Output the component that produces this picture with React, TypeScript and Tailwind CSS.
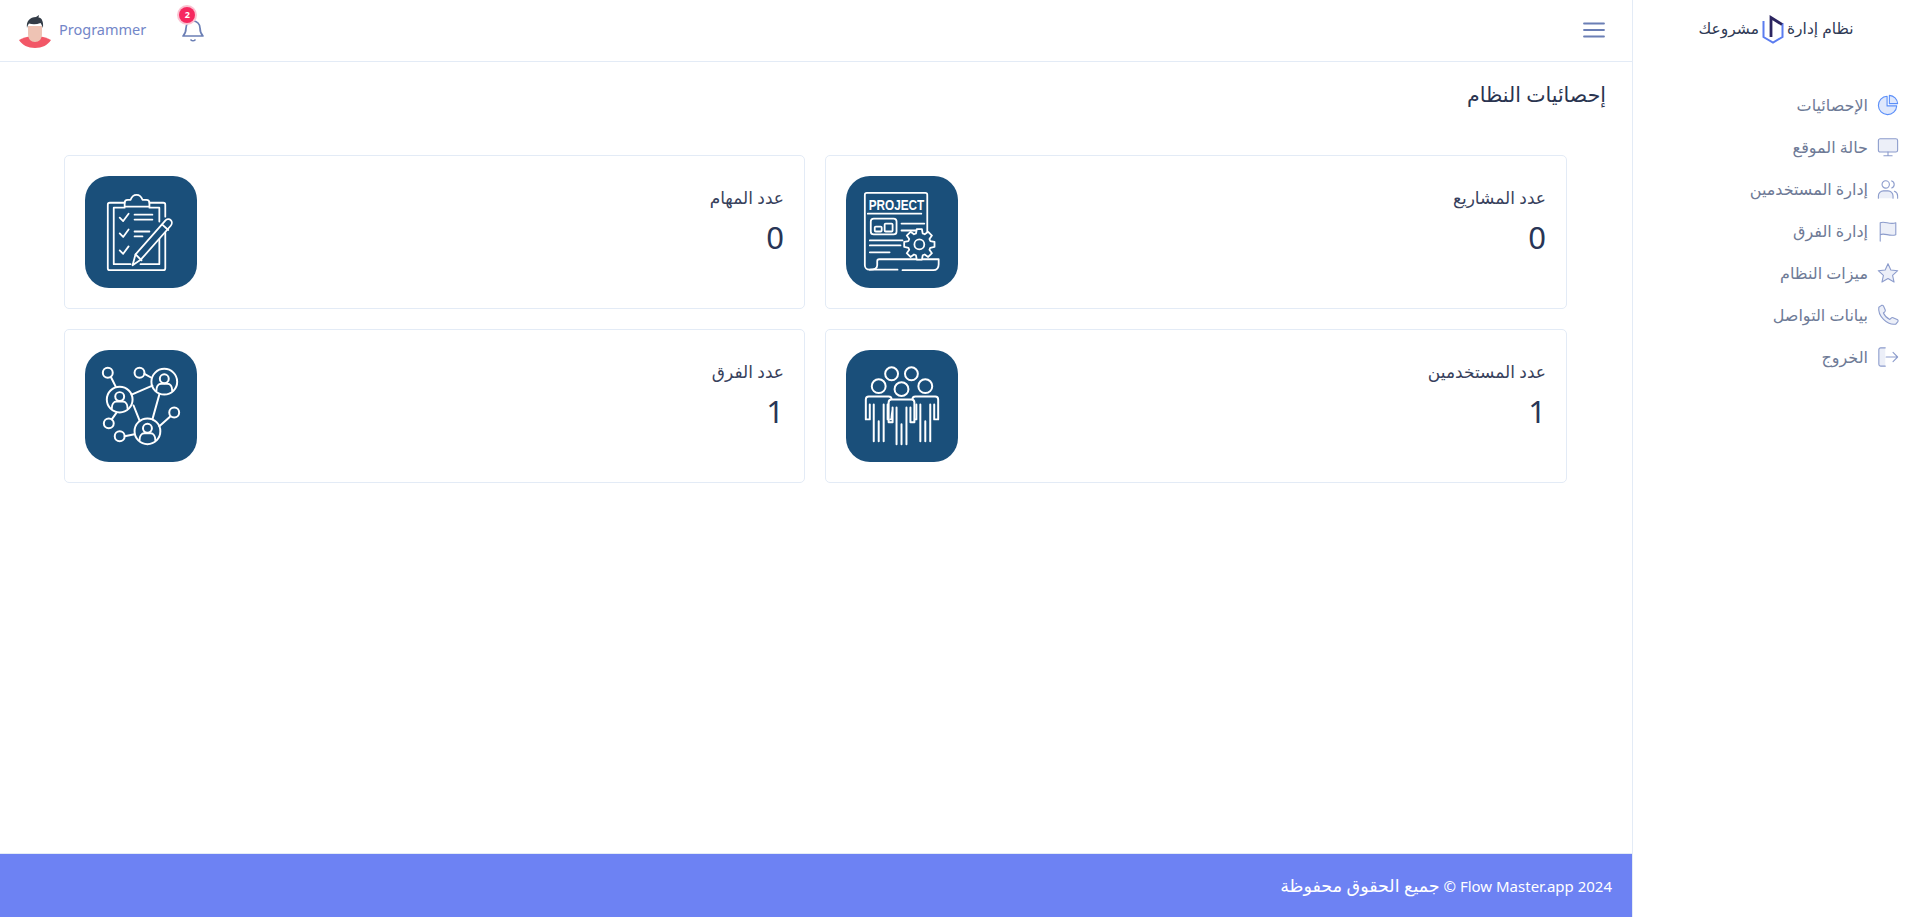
import React from 'react';

const font = "font-['Noto_Sans','DejaVu_Sans',sans-serif]";
const tile = '#1a4f7a';

const PieIcon = () => (
  <svg viewBox="0 0 24 24" className="w-[22px] h-[22px]" fill="none" stroke="#5b8ff9" strokeWidth="1.2" strokeLinejoin="round">
    <path d="M11 2.500a10 10 0 1 0 10.500 10.500H11z" fill="#dfe8fc" />
    <path d="M13.500 1.500a9.500 9.500 0 0 1 9 9h-9z" fill="#dfe8fc" />
  </svg>
);

const MonitorIcon = () => (
  <svg viewBox="0 0 24 24" className="w-[22px] h-[22px]" fill="none" stroke="#8c9ccc" strokeWidth="1.2" strokeLinecap="round" strokeLinejoin="round">
    <rect x="1.500" y="3" width="21" height="14.500" rx="2" fill="#eceff8" />
    <path d="M12 17.500v4M7.500 21.500h9" />
  </svg>
);

const UsersIcon = () => (
  <svg viewBox="0 0 24 24" className="w-[22px] h-[22px]" fill="none" stroke="#8c9ccc" strokeWidth="1.2" strokeLinecap="round" strokeLinejoin="round">
    <circle cx="9.500" cy="7" r="4" />
    <path d="M1.500 22v-2.500A5.500 5.500 0 0 1 7 14h5a5.500 5.500 0 0 1 5.500 5.500V22" fill="#eceff8" />
    <path d="M16 3.200a4 4 0 0 1 0 7.600M22.500 22v-2.500a5.500 5.500 0 0 0-3.500-5" />
  </svg>
);

const FlagIcon = () => (
  <svg viewBox="0 0 24 24" className="w-[22px] h-[22px]" fill="none" stroke="#8c9ccc" strokeWidth="1.2" strokeLinecap="round" strokeLinejoin="round">
    <path d="M3.500 23V3c5-2.500 10 2.500 17 0v13c-7 2.500-12-2.500-17 0z" fill="#eceff8" />
  </svg>
);

const StarIcon = () => (
  <svg viewBox="0 0 24 24" className="w-[22px] h-[22px]" fill="none" stroke="#8c9ccc" strokeWidth="1.2" strokeLinejoin="round">
    <path d="M12 1.800l3.100 6.900 7.500.8-5.600 5 1.600 7.400L12 18.100l-6.600 3.800L7 14.500l-5.600-5 7.500-.8z" fill="#eceff8" />
  </svg>
);

const PhoneIcon = () => (
  <svg viewBox="0 0 24 24" className="w-[22px] h-[22px]" fill="none" stroke="#8c9ccc" strokeWidth="1.2" strokeLinejoin="round">
    <path d="M2 3.500 5 1.500c1-.4 1.700 0 2.200 1L9 6.500c.3.800 0 1.400-.6 2L7 9.800c1.300 3 3.700 5.500 7 7l1.500-1.500c.6-.6 1.300-.7 2-.4l4.500 2c1 .5 1.300 1.300.8 2.300L20.500 22C11 23.500.5 13 2 3.500z" fill="#eceff8" />
  </svg>
);

const LogoutIcon = () => (
  <svg viewBox="0 0 24 24" className="w-[22px] h-[22px]" fill="none" stroke="#8c9ccc" strokeWidth="1.2" strokeLinecap="round" strokeLinejoin="round">
    <path d="M9 2H4a2 2 0 0 0-2 2v16a2 2 0 0 0 2 2h5" fill="#eceff8" />
    <path d="M10 12h12M17.500 7l5 5-5 5" />
  </svg>
);

const Logo = () => (
  <svg viewBox="0 0 22 30" className="w-[22px] h-[30px]" fill="none" strokeLinejoin="miter">
    <path d="M1.500 7v16l9.500 5.500L20.500 23V9" stroke="#5b7cf0" strokeWidth="2" />
    <path d="M9 23V3.500l11 7" stroke="#2c2560" strokeWidth="2.800" />
  </svg>
);

const Avatar = () => (
  <svg viewBox="0 0 34 34" className="w-[34px] h-[34px]">
    <path d="M1 26c4-2 9-4 16-4s12 2 16 4c-3 5-9 8-16 8S4 31 1 26z" fill="#f25767" />
    <path d="M10 12h14v8c0 5-3 8-7 8s-7-3-7-8z" fill="#eec3b4" />
    <path d="M9 14c-1-7 3-11 9-11l3-2-.5 2.500c4 .5 5 5 4.500 10.500-1-2-1.500-4-2.500-5-4 1.500-8 1.500-11.500.5-1 1-1.500 3-2 4.500z" fill="#333c47" />
  </svg>
);

// gear outline with eight teeth
const gearPoints = (cx: number, cy: number, outer: number, inner: number) => {
  const pts: string[] = [];
  for (let i = 0; i < 8; i++) {
    const a = (i * Math.PI) / 4;
    [
      [-0.3, inner],
      [-0.17, outer],
      [0.17, outer],
      [0.3, inner],
    ].forEach(([d, r]) => {
      pts.push(`${(cx + Math.cos(a + d) * r).toFixed(1)},${(cy + Math.sin(a + d) * r).toFixed(1)}`);
    });
  }
  return pts.join(' ');
};

const ProjectIcon = () => (
  <svg viewBox="0 0 113 113" className="w-full h-full" fill="none" stroke="#fff" strokeWidth="1.800" strokeLinecap="round" strokeLinejoin="round">
    <path d="M82 79V19a2 2 0 0 0-2-2H21a2 2 0 0 0-2 2v71c0 2.500 2 4.500 4.500 4.500h28.500" />
    <path d="M24 94.500c4 0 7.500-1 7.500-4.500v-4a2 2 0 0 1 2-2h60v5c0 3.500-2 6-5.500 6H57" />
    <text x="51" y="34" textAnchor="middle" fill="#fff" stroke="none" fontSize="14" fontWeight="700" fontFamily="'Liberation Sans', sans-serif" textLength="56" lengthAdjust="spacingAndGlyphs">PROJECT</text>
    <path d="M22 38h54M56 48h23M56 55h15M24 65h33M24 70h31M24 77h20" />
    <rect x="25" y="43" width="26" height="16" rx="3" />
    <rect x="29" y="51" width="7" height="5" rx="1" />
    <rect x="39" y="48" width="8" height="8" rx="1" />
    <polygon points={gearPoints(74, 69, 15.500, 11.500)} fill={tile} />
    <circle cx="74" cy="69" r="5" />
  </svg>
);

const TasksIcon = () => (
  <svg viewBox="0 0 113 113" className="w-full h-full" fill="none" stroke="#fff" strokeWidth="1.800" strokeLinecap="round" strokeLinejoin="round">
    <path d="M40 27H25a2 2 0 0 0-2 2v64a2 2 0 0 0 2 2h54a2 2 0 0 0 2-2V52M65 27h14a2 2 0 0 1 2 2v12" />
    <path d="M40 32H29v57h17M65 32h10v14M75 62v27H56" />
    <path d="M40 31v-4c0-2 1-3 3-3h3c1-3 3-5 6-5s5 2 6 5h4c2 0 3 1 3 3v4z" />
    <path d="M35 42l3.500 3.500L44 38M35 58l3.500 3.500L44 54M35 75l3.500 3.500L44 71" />
    <path d="M50 39h18M50 44h18M50 56h15M50 61h8" />
    <path d="M48 90l3-11 30-34c1.500-1.700 4-2 5.500-.5s1.500 4 0 5.700l-30 34z" fill={tile} />
    <path d="M51 79l6 6M78 49l6 5.500" />
  </svg>
);

const Person = ({ x, y }: { x: number; y: number }) => (
  <g transform={`translate(${x} ${y})`}>
    <circle cy="-10.500" r="7" fill={tile} />
    <path d="M-13 23V3a3 3 0 0 1 3-3h20a3 3 0 0 1 3 3v20H9V8M-13 23h4V8" fill={tile} stroke="none" />
    <path d="M-13 23V3a3 3 0 0 1 3-3h20a3 3 0 0 1 3 3v20H9V8M-13 23h4V8M-5 8v37M5 8v37M0 25v20" />
  </g>
);

const UsersBigIcon = () => (
  <svg viewBox="0 0 113 113" className="w-full h-full" fill="none" stroke="#fff" strokeWidth="2" strokeLinecap="round" strokeLinejoin="round">
    <circle cx="46" cy="24" r="6.500" />
    <circle cx="66" cy="24" r="6.500" />
    <Person x={33} y={47} />
    <Person x={80} y={47} />
    <Person x={56} y={50} />
  </svg>
);

const Node = ({ x, y }: { x: number; y: number }) => (
  <g transform={`translate(${x} ${y})`}>
    <circle r="13" />
    <circle cy="-3" r="4.500" />
    <path d="M-8 9c0-4 2-7 5-7h6c3 0 5 3 5 7" />
  </g>
);

const TeamsIcon = () => (
  <svg viewBox="0 0 113 113" className="w-full h-full" fill="none" stroke="#fff" strokeWidth="2" strokeLinecap="round">
    <Node x={35} y={50} />
    <Node x={80} y={32} />
    <Node x={63} y={82} />
    <circle cx="23" cy="23" r="5" />
    <circle cx="55" cy="23" r="5" />
    <circle cx="90" cy="63" r="5" />
    <circle cx="24" cy="74" r="5" />
    <circle cx="35" cy="87" r="5" />
    <path d="M26 27l5 10M60 24l7 4M47 45l21-9M75 45l-7 25M49 56l6 15M27 70l5-7M40 87l10-2M75 77l11-10" />
  </svg>
);

const nav = [
  { label: 'الإحصائيات', icon: <PieIcon /> },
  { label: 'حالة الموقع', icon: <MonitorIcon /> },
  { label: 'إدارة المستخدمين', icon: <UsersIcon /> },
  { label: 'إدارة الفرق', icon: <FlagIcon /> },
  { label: 'ميزات النظام', icon: <StarIcon /> },
  { label: 'بيانات التواصل', icon: <PhoneIcon /> },
  { label: 'الخروج', icon: <LogoutIcon /> },
];

const stats = [
  { label: 'عدد المشاريع', value: 0, icon: <ProjectIcon /> },
  { label: 'عدد المهام', value: 0, icon: <TasksIcon /> },
  { label: 'عدد المستخدمين', value: 1, icon: <UsersBigIcon /> },
  { label: 'عدد الفرق', value: 1, icon: <TeamsIcon /> },
];

export default function App() {
  return (
    <div dir="rtl" className={`${font} flex h-[917px] bg-white overflow-hidden`}>
      {/* sidebar */}
      <aside className="w-[285px] shrink-0 border-l border-[#e3ebf6] pr-[18px]">
        <div className="h-[58px] flex items-center justify-center gap-[3px] pl-[20px] text-[15.5px] text-[#2f3a55]">
          <span>نظام إدارة</span>
          <Logo />
          <span>مشروعك</span>
        </div>
        <nav className="mt-[26px] flex flex-col">
          {nav.map((item) => (
            <div key={item.label} className="h-[42px] flex items-center gap-[9px] text-[16px] text-[#6e7a96]">
              {item.icon}
              <span>{item.label}</span>
            </div>
          ))}
        </nav>
      </aside>

      <div className="flex-1 flex flex-col min-w-0">
        {/* top bar */}
        <header className="h-[62px] shrink-0 border-b border-[#e3ebf6] flex items-center justify-between pr-[26px] pl-[18px]">
          <svg viewBox="0 0 24 24" className="w-[24px] h-[24px] mt-[-2px]" fill="none" stroke="#6b7fb5" strokeWidth="1.800" strokeLinecap="round">
            <path d="M2 5.500h20M2 12h20M2 18.500h20" />
          </svg>
          <div className="flex items-center">
            <div className="relative ml-[35px] mt-[-3px]">
              <svg viewBox="0 0 24 24" className="w-[24px] h-[26px]" fill="none" stroke="#6b7fb5" strokeWidth="1.700" strokeLinecap="round" strokeLinejoin="round">
                <path d="M2 19c2-2 3-3.500 3-8 0-4 3-7 7-7s7 3 7 7c0 4.500 1 6 3 8z" />
                <path d="M10 23c1 1 3 1 4 0" />
              </svg>
              <span className="absolute top-[-9px] right-[10px] w-[16px] h-[16px] rounded-full bg-[#f6285f] ring-2 ring-[#fbc2d1] text-white text-[9px] font-bold flex items-center justify-center">2</span>
            </div>
            <span className="text-[14.5px] text-[#7386c8] ml-[7px] mt-[-2px]">Programmer</span>
            <Avatar />
          </div>
        </header>

        <main className="flex-1">
          <h1 className="text-[20.5px] leading-[28px] text-[#2a3450] mt-[18px] mr-[26px]">إحصائيات النظام</h1>
          <div className="grid grid-cols-[1fr_741px] gap-[20px] mt-[47px] mr-[65px] ml-[64px]">
            {stats.map((s) => (
              <div key={s.label} className="h-[154px] rounded-[5px] border border-[#e3ebf6] p-[20px] flex items-start justify-between">
                <div className="flex flex-col">
                  <span className="text-[17px] leading-[24px] mt-[10px] text-[#37415c]">{s.label}</span>
                  <span className="text-[31px] leading-[40px] mt-[7px] text-[#283556]">{s.value}</span>
                </div>
                <div className="w-[112px] h-[112px] rounded-[24px] bg-[#1a4f7a] shrink-0">{s.icon}</div>
              </div>
            ))}
          </div>
        </main>

        <footer className="h-[64px] shrink-0 bg-[#6d82f3] border-t border-[#e3ebf6] flex items-center px-[20px] text-[15px] text-white">
          <span>
            Flow Master.app 2024 © <span className="text-[17.5px]">جميع الحقوق محفوظة</span>
          </span>
        </footer>
      </div>
    </div>
  );
}
